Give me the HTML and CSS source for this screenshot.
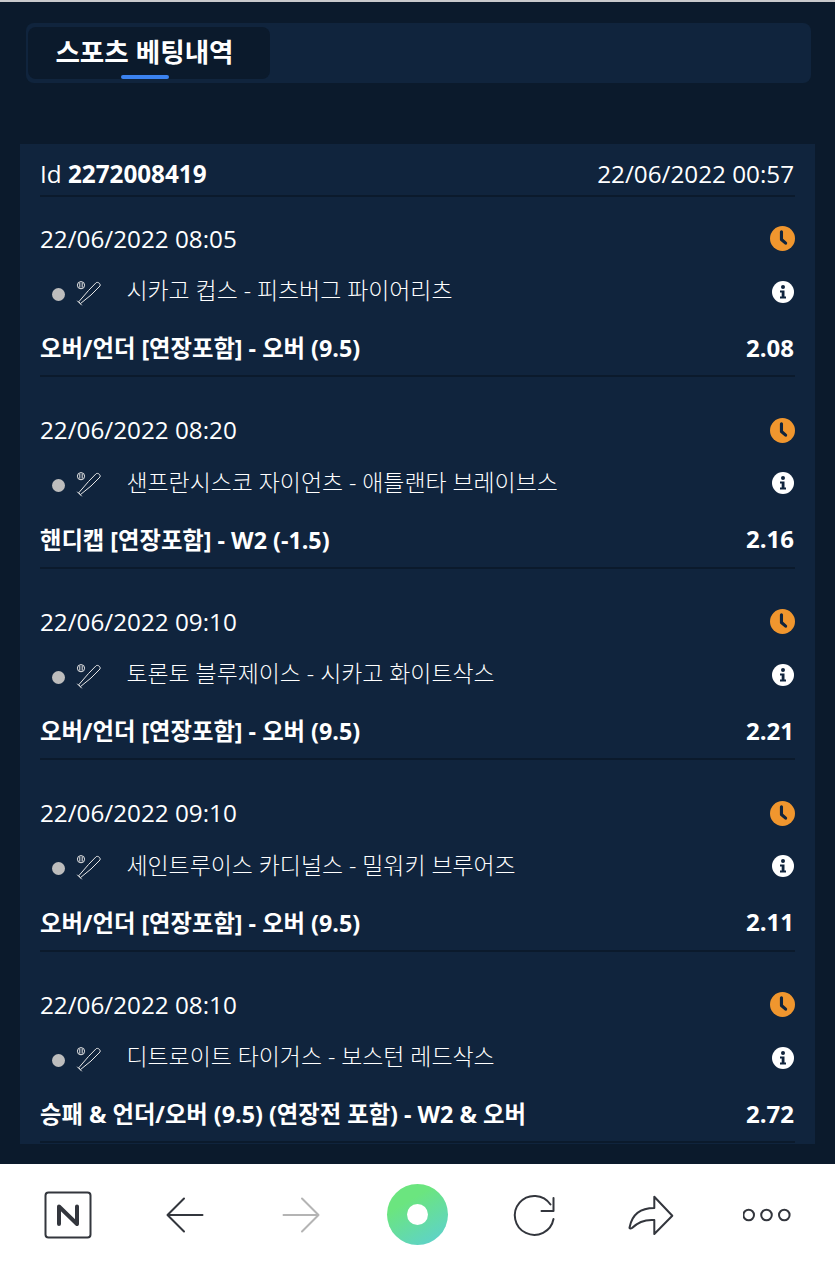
FILE: index.html
```html
<!DOCTYPE html>
<html lang="ko">
<head>
    <meta charset="UTF-8">
    <meta name="viewport" content="width=device-width, initial-scale=1.0">
    <title>스포츠 베팅내역</title>
    <link rel="stylesheet" href="styles.css">
</head>
<body>
    <svg class="sprite" width="0" height="0">
        <symbol id="bat" viewBox="0 0 26 26">
            <circle cx="5" cy="5.200" r="3.600" fill="none" stroke="#e8e8e8" stroke-width="1"/>
            <path d="M3.800 2.800v4.800M6.200 2.800v4.800" stroke="#e8e8e8" stroke-width="1"/>
            <path d="M3 21.500L12.500 10.500 20 2.800C21.500 1.500 25 3.500 24 6L15 15 4.800 23.300z M1.500 21l4 4" fill="none" stroke="#e8e8e8" stroke-width="1" stroke-linejoin="round" stroke-linecap="round"/>
        </symbol>
        <symbol id="clock" viewBox="0 0 24 24">
            <circle cx="12" cy="12" r="12" fill="#f0962e"/>
            <path d="M11 5.500v7.500l4 3.500" fill="none" stroke="#10243d" stroke-width="3" stroke-linecap="round" stroke-linejoin="round"/>
        </symbol>
        <symbol id="info" viewBox="0 0 22 22">
            <circle cx="11" cy="11" r="11" fill="#fff"/>
            <circle cx="11" cy="6" r="2" fill="#10243d"/>
            <path d="M8 9.500h4.500v6H14v2H8v-2h1.700v-4H8z" fill="#10243d"/>
        </symbol>
    </svg>

    <div class="top-line"></div>

    <main class="page">
        <nav class="tabs">
            <div class="tab">스포츠 베팅내역</div>
        </nav>

        <section class="card">
            <header class="card-head">
                <span>Id <b>2272008419</b></span>
                <span>22/06/2022 00:57</span>
            </header>

            <article class="bet">
                <div class="row"><span>22/06/2022 08:05</span><svg class="clock"><use href="#clock"/></svg></div>
                <div class="row match">
                    <span class="dot"></span><svg class="bat"><use href="#bat"/></svg>
                    <span class="teams">시카고 컵스 - 피츠버그 파이어리츠</span>
                    <svg class="info"><use href="#info"/></svg>
                </div>
                <div class="row pick"><span>오버/언더 [연장포함] - 오버 (9.5)</span><span class="odds">2.08</span></div>
            </article>

            <article class="bet">
                <div class="row"><span>22/06/2022 08:20</span><svg class="clock"><use href="#clock"/></svg></div>
                <div class="row match">
                    <span class="dot"></span><svg class="bat"><use href="#bat"/></svg>
                    <span class="teams">샌프란시스코 자이언츠 - 애틀랜타 브레이브스</span>
                    <svg class="info"><use href="#info"/></svg>
                </div>
                <div class="row pick"><span>핸디캡 [연장포함] - W2 (-1.5)</span><span class="odds">2.16</span></div>
            </article>

            <article class="bet">
                <div class="row"><span>22/06/2022 09:10</span><svg class="clock"><use href="#clock"/></svg></div>
                <div class="row match">
                    <span class="dot"></span><svg class="bat"><use href="#bat"/></svg>
                    <span class="teams">토론토 블루제이스 - 시카고 화이트삭스</span>
                    <svg class="info"><use href="#info"/></svg>
                </div>
                <div class="row pick"><span>오버/언더 [연장포함] - 오버 (9.5)</span><span class="odds">2.21</span></div>
            </article>

            <article class="bet">
                <div class="row"><span>22/06/2022 09:10</span><svg class="clock"><use href="#clock"/></svg></div>
                <div class="row match">
                    <span class="dot"></span><svg class="bat"><use href="#bat"/></svg>
                    <span class="teams">세인트루이스 카디널스 - 밀워키 브루어즈</span>
                    <svg class="info"><use href="#info"/></svg>
                </div>
                <div class="row pick"><span>오버/언더 [연장포함] - 오버 (9.5)</span><span class="odds">2.11</span></div>
            </article>

            <article class="bet">
                <div class="row"><span>22/06/2022 08:10</span><svg class="clock"><use href="#clock"/></svg></div>
                <div class="row match">
                    <span class="dot"></span><svg class="bat"><use href="#bat"/></svg>
                    <span class="teams">디트로이트 타이거스 - 보스턴 레드삭스</span>
                    <svg class="info"><use href="#info"/></svg>
                </div>
                <div class="row pick"><span>승패 &amp; 언더/오버 (9.5) (연장전 포함) - W2 &amp; 오버</span><span class="odds">2.72</span></div>
            </article>
        </section>
    </main>

    <footer class="toolbar">
        <svg class="tool" viewBox="0 0 48 48">
            <rect x="1.500" y="1.500" width="45" height="45" rx="3" fill="none" stroke="#33363d" stroke-width="2"/>
            <path d="M15 33V15.500L33 33V15.500" fill="none" stroke="#33363d" stroke-width="4" stroke-linecap="round" stroke-linejoin="round"/>
        </svg>
        <svg class="tool" viewBox="0 0 48 48">
            <path d="M41.500 24H6.500M23 7.500L6.500 24 23 40.500" fill="none" stroke="#33363d" stroke-width="2" stroke-linecap="round" stroke-linejoin="round"/>
        </svg>
        <svg class="tool" viewBox="0 0 48 48">
            <path d="M6.500 24h35M25 7.500L41.500 24 25 40.500" fill="none" stroke="#b4b4b4" stroke-width="2" stroke-linecap="round" stroke-linejoin="round"/>
        </svg>
        <div class="home"><span></span></div>
        <svg class="tool" viewBox="0 0 48 48">
            <path d="M43.500 7v13H31.500M43.500 28A19.500 19.500 0 1 1 40.500 13.500" fill="none" stroke="#33363d" stroke-width="2" stroke-linecap="round" stroke-linejoin="round"/>
        </svg>
        <svg class="tool" viewBox="0 0 48 48">
            <path d="M27.300 5.700L45.300 24.700 27.300 43V29C15 28 9 33 5 37c-1.500 1-3 .5-2.300-1C5 24 13 17 27.300 17z" fill="none" stroke="#33363d" stroke-width="2" stroke-linejoin="round"/>
        </svg>
        <svg class="tool" viewBox="0 0 48 48">
            <g fill="none" stroke="#33363d" stroke-width="2">
                <circle cx="5.700" cy="24" r="5.300"/><circle cx="23.500" cy="24" r="5.300"/><circle cx="41.300" cy="24" r="5.300"/>
            </g>
        </svg>
    </footer>
</body>
</html>
```
FILE: styles.css
```css
* {
    box-sizing: border-box;
}
html, body {
    margin: 0;
    height: 1265px;
    overflow: hidden;
}
body {
    display: flex;
    flex-direction: column;
    font-family: "Open Sans", "Noto Sans CJK KR", sans-serif;
    font-size: 24.250px;
    color: #fff;
    background-color: #0b1a2c;
}
.sprite {
    display: none;
}
.top-line {
    height: 2px;
    background-color: #c9c9cc;
    flex: none;
}
.page {
    height: 1162px;
    flex: none;
    overflow: hidden;
    padding: 21px 20px 0;
}
.tabs {
    height: 60px;
    margin: 0 4px 0 6px;
    padding: 4px 2px;
    background-color: #10243d;
    border-radius: 8px;
}
.tab {
    position: relative;
    width: 242px;
    height: 52px;
    padding: 4px 9px 0 0;
    background-color: #0b1a2c;
    border-radius: 8px;
    text-align: center;
    font-size: 26.600px;
    line-height: 42px;
    font-weight: 700;
}
.tab::after {
    content: "";
    position: absolute;
    left: 93px;
    bottom: 0;
    width: 48px;
    height: 4px;
    border-radius: 2px;
    background-color: #3b82f0;
}
.card {
    height: 1000px;
    margin-top: 61px;
    padding: 0 20px;
    background-color: #10243d;
}
.card-head {
    height: 53px;
    padding: 12px 1px 0 0;
    display: flex;
    justify-content: space-between;
    line-height: 36px;
    border-bottom: 2px solid #0b1a2c;
}
.card-head b {
    font-weight: 700;
}
.bet {
    height: 180px;
    margin-bottom: 11.500px;
    padding-top: 23px;
    border-bottom: 2px solid #0b1a2c;
}
.row {
    display: flex;
    justify-content: space-between;
    align-items: center;
    height: 36px;
}
.match {
    margin-top: 15px;
    justify-content: flex-start;
}
.dot {
    width: 13px;
    height: 13px;
    margin: 10px 0 0 12px;
    border-radius: 50%;
    background-color: #bdbdbd;
}
.bat {
    width: 26px;
    height: 26px;
    margin: 7px 0 0 11px;
}
.teams {
    margin-left: 24.500px;
    font-size: 22.900px;
    font-weight: 300;
    flex: 1;
}
.clock {
    width: 25px;
    height: 25px;
    margin-top: 1px;
}
.info {
    width: 22px;
    height: 22px;
    margin: 5px 1px 0 0;
}
.pick {
    margin-top: 22px;
    font-weight: 700;
    font-size: 23.300px;
}
.odds {
    font-size: 24px;
    margin-right: 1px;
}
.toolbar {
    flex: 1;
    background-color: #fff;
    display: grid;
    grid-template-columns: repeat(7, 116.500px);
    justify-items: center;
    align-items: center;
    padding-left: 10px;
}
.tool {
    width: 48px;
    height: 48px;
}
.home {
    width: 61px;
    height: 61px;
    border-radius: 50%;
    background: linear-gradient(150deg, #6be57f 30%, #5ccfd5 100%);
    display: flex;
    align-items: center;
    justify-content: center;
}
.home span {
    width: 21px;
    height: 21px;
    border-radius: 50%;
    background-color: #fff;
}
```
